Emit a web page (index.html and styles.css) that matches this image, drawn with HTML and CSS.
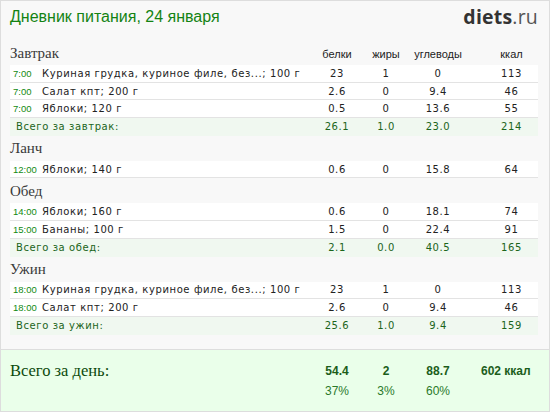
FILE: index.html
```html
<!DOCTYPE html>
<html lang="ru">
<head>
<meta charset="utf-8">
<title>Дневник питания</title>
<link rel="stylesheet" href="styles.css">
</head>
<body>
<div class="page">
  <div class="header">
    <div class="title">Дневник питания, 24 января</div>
    <div class="logo"><b>diets</b>.ru</div>
  </div>
  <div class="diary">
    <div class="grid heading">
      <div class="meal">Завтрак</div>
      <div class="lbl">белки</div><div class="lbl">жиры</div><div class="lbl">углеводы</div><div></div><div class="lbl">ккал</div>
    </div>
    <div class="grid row">
      <div class="name"><span class="time">7:00</span>Куриная грудка, куриное филе, без...; 100 г</div>
      <div class="num">23</div><div class="num">1</div><div class="num">0</div><div></div><div class="num">113</div>
    </div>
    <div class="grid row">
      <div class="name"><span class="time">7:00</span>Салат кпт; 200 г</div>
      <div class="num">2.6</div><div class="num">0</div><div class="num">9.4</div><div></div><div class="num">46</div>
    </div>
    <div class="grid row">
      <div class="name"><span class="time">7:00</span>Яблоки; 120 г</div>
      <div class="num">0.5</div><div class="num">0</div><div class="num">13.6</div><div></div><div class="num">55</div>
    </div>
    <div class="grid row total">
      <div class="name">Всего за завтрак:</div>
      <div class="num">26.1</div><div class="num">1.0</div><div class="num">23.0</div><div></div><div class="num">214</div>
    </div>

    <div class="grid heading"><div class="meal">Ланч</div></div>
    <div class="grid row">
      <div class="name"><span class="time">12:00</span>Яблоки; 140 г</div>
      <div class="num">0.6</div><div class="num">0</div><div class="num">15.8</div><div></div><div class="num">64</div>
    </div>

    <div class="grid heading"><div class="meal">Обед</div></div>
    <div class="grid row">
      <div class="name"><span class="time">14:00</span>Яблоки; 160 г</div>
      <div class="num">0.6</div><div class="num">0</div><div class="num">18.1</div><div></div><div class="num">74</div>
    </div>
    <div class="grid row">
      <div class="name"><span class="time">15:00</span>Бананы; 100 г</div>
      <div class="num">1.5</div><div class="num">0</div><div class="num">22.4</div><div></div><div class="num">91</div>
    </div>
    <div class="grid row total">
      <div class="name">Всего за обед:</div>
      <div class="num">2.1</div><div class="num">0.0</div><div class="num">40.5</div><div></div><div class="num">165</div>
    </div>

    <div class="grid heading"><div class="meal">Ужин</div></div>
    <div class="grid row">
      <div class="name"><span class="time">18:00</span>Куриная грудка, куриное филе, без...; 100 г</div>
      <div class="num">23</div><div class="num">1</div><div class="num">0</div><div></div><div class="num">113</div>
    </div>
    <div class="grid row">
      <div class="name"><span class="time">18:00</span>Салат кпт; 200 г</div>
      <div class="num">2.6</div><div class="num">0</div><div class="num">9.4</div><div></div><div class="num">46</div>
    </div>
    <div class="grid row total">
      <div class="name">Всего за ужин:</div>
      <div class="num">25.6</div><div class="num">1.0</div><div class="num">9.4</div><div></div><div class="num">159</div>
    </div>
  </div>
  <div class="footer">
    <div class="grid sum">
      <div class="day">Всего за день:</div>
      <div class="bold">54.4</div><div class="bold">2</div><div class="bold">88.7</div><div></div><div class="bold kcal">602 ккал</div>
    </div>
    <div class="grid pct">
      <div></div>
      <div>37%</div><div>3%</div><div>60%</div><div></div><div></div>
    </div>
  </div>
</div>
</body>
</html>
```

FILE: styles.css
```css
html, body {
  margin: 0;
  padding: 0;
  background: #f8f8f8;
}
.page {
  width: 550px;
  height: 412px;
  box-sizing: border-box;
  border: 1px solid #dddddd;
  background: #f8f8f8;
  display: flex;
  flex-direction: column;
}
.header {
  height: 39px;
  display: flex;
  justify-content: space-between;
  align-items: flex-start;
  padding: 0 11px 0 9px;
}
.title {
  font-family: "Liberation Sans", Arial, sans-serif;
  font-size: 16px;
  color: #138313;
  margin-top: 6px;
  line-height: 20px;
}
.logo {
  font-family: "Open Sans", sans-serif;
  font-size: 19.5px;
  line-height: 24px;
  margin-top: 4px;
  color: #555;
  letter-spacing: 0.2px;
}
.logo b {
  color: #333;
  font-weight: 700;
}
.diary {
  padding: 0 11px 0 9px;
}
.grid {
  display: grid;
  grid-template-columns: 302px 50px 48px 56px 20px 51px;
  align-items: center;
}
.heading {
  height: 25px;
}
.meal {
  font-family: "Liberation Serif", "Times New Roman", serif;
  font-size: 15px;
  color: #3a3a3a;
  padding-top: 1px;
}
.lbl {
  font-family: "Liberation Sans", Arial, sans-serif;
  font-size: 11px;
  color: #222;
  text-align: center;
  padding-top: 2px;
}
.row {
  height: 16.7px;
  background: #ffffff;
  border-bottom: 1px solid #e3e3e3;
  font-family: "DejaVu Sans", Verdana, sans-serif;
  font-size: 10px;
  letter-spacing: 0.6px;
  color: #222;
}
.name {
  padding-left: 3px;
  white-space: nowrap;
  display: flex;
  align-items: center;
}
.time {
  font-family: "Liberation Sans", Arial, sans-serif;
  font-size: 9.5px;
  letter-spacing: 0;
  color: #128a12;
  width: 29px;
  flex: none;
}
.num {
  text-align: center;
}
.total {
  background: #f0f8f0;
  color: #1b651b;
  border-bottom: 1px solid #f0f8f0;
}
.total .name {
  padding-left: 6px;
}
.footer {
  margin-top: auto;
  height: 61px;
  border-top: 1px solid #dddddd;
  background: #eaffea;
  padding: 0 11px 0 9px;
}
.sum {
  height: 22px;
  margin-top: 10px;
}
.day {
  font-family: "Liberation Serif", "Times New Roman", serif;
  font-size: 16.5px;
  color: #0c4a0c;
}
.bold {
  font-family: "Liberation Sans", Arial, sans-serif;
  font-size: 12px;
  font-weight: 700;
  color: #1b5e1b;
  text-align: center;
}
.kcal {
  text-align: left;
  margin-left: -5px;
  white-space: nowrap;
}
.pct {
  height: 18px;
  font-family: "Liberation Sans", Arial, sans-serif;
  font-size: 12px;
  color: #2b7a2b;
  text-align: center;
}
```
